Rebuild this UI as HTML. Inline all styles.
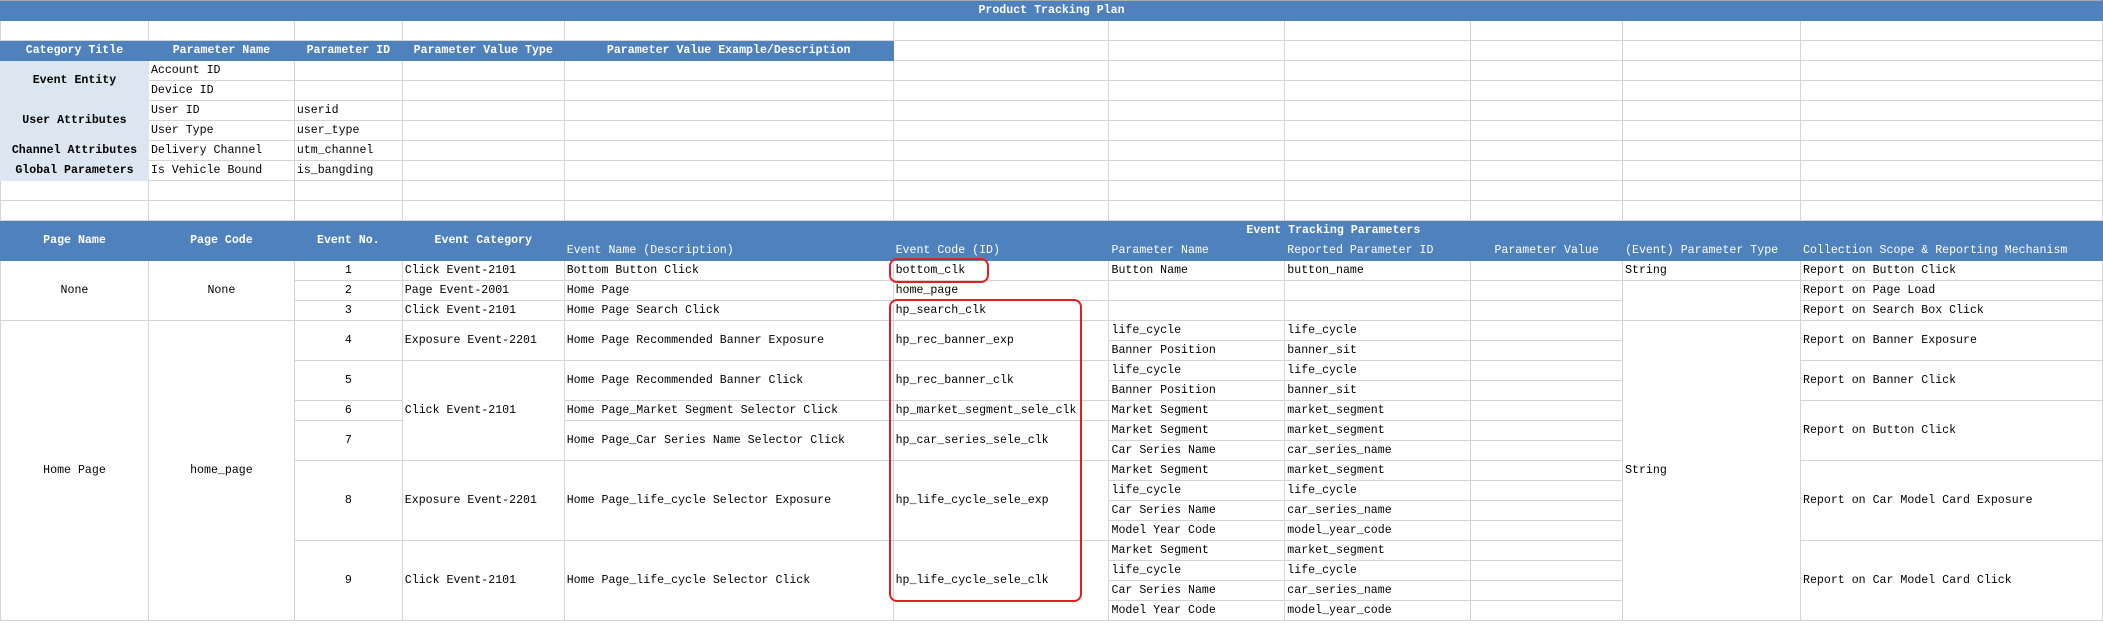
<!DOCTYPE html>
<html style="overflow:hidden;height:627px"><head><meta charset="utf-8"><style>
html,body{margin:0;width:2103px;height:627px;overflow:hidden;background:#fff}
body{position:relative}
table{border-collapse:collapse;table-layout:fixed;font-family:"Liberation Mono","Noto Sans CJK SC",monospace;font-size:11.6px;color:#000}
td{border:1px solid #d4d4d4;height:19px;padding:0 2px;white-space:nowrap;overflow:hidden;line-height:18px}
tr{height:20px}
.b{background:#4f81bd;color:#fff;border-color:#4f81bd;font-weight:bold;text-align:center}
.s{background:#4f81bd;color:#fff;border-color:#4f81bd;border-top:1px solid #9db5d8}
.lb{background:#dce6f1;border-color:#dce6f1;font-weight:bold;text-align:center}
.c{text-align:center}
.r{position:absolute;border:2px solid #e02020;border-radius:8px}
</style></head><body>
<table>
<colgroup><col style="width:148px"><col style="width:146px"><col style="width:108px"><col style="width:162px"><col style="width:329px"><col style="width:216px"><col style="width:176px"><col style="width:186px"><col style="width:152px"><col style="width:178px"><col style="width:302px"></colgroup>
<tr><td class="b" colspan="11" style="border-top:1px solid #aaa">Product Tracking Plan</td></tr>
<tr><td></td><td></td><td></td><td></td><td></td><td></td><td></td><td></td><td></td><td></td><td></td></tr>
<tr><td class="b">Category Title</td><td class="b">Parameter Name</td><td class="b">Parameter ID</td><td class="b">Parameter Value Type</td><td class="b">Parameter Value Example/Description</td><td></td><td></td><td></td><td></td><td></td><td></td></tr>
<tr><td class="lb" rowspan="2">Event Entity</td><td>Account ID</td><td></td><td></td><td></td><td></td><td></td><td></td><td></td><td></td><td></td></tr>
<tr><td>Device ID</td><td></td><td></td><td></td><td></td><td></td><td></td><td></td><td></td><td></td></tr>
<tr><td class="lb" rowspan="2">User Attributes</td><td>User ID</td><td>userid</td><td></td><td></td><td></td><td></td><td></td><td></td><td></td><td></td></tr>
<tr><td>User Type</td><td>user_type</td><td></td><td></td><td></td><td></td><td></td><td></td><td></td><td></td></tr>
<tr><td class="lb">Channel Attributes</td><td>Delivery Channel</td><td>utm_channel</td><td></td><td></td><td></td><td></td><td></td><td></td><td></td><td></td></tr>
<tr><td class="lb">Global Parameters</td><td>Is Vehicle Bound</td><td>is_bangding</td><td></td><td></td><td></td><td></td><td></td><td></td><td></td><td></td></tr>
<tr><td></td><td></td><td></td><td></td><td></td><td></td><td></td><td></td><td></td><td></td><td></td></tr>
<tr><td></td><td></td><td></td><td></td><td></td><td></td><td></td><td></td><td></td><td></td><td></td></tr>
<tr><td class="b" rowspan="2">Page Name</td><td class="b" rowspan="2">Page Code</td><td class="b" rowspan="2">Event No.</td><td class="b" rowspan="2">Event Category</td><td class="b" colspan="7">Event Tracking Parameters</td></tr>
<tr><td class="s">Event Name (Description)</td><td class="s">Event Code (ID)</td><td class="s">Parameter Name</td><td class="s">Reported Parameter ID</td><td class="s c">Parameter Value</td><td class="s">(Event) Parameter Type</td><td class="s">Collection Scope &amp; Reporting Mechanism</td></tr>
<tr><td class="c" rowspan="3">None</td><td class="c" rowspan="3">None</td><td class="c">1</td><td>Click Event-2101</td><td>Bottom Button Click</td><td>bottom_clk</td><td>Button Name</td><td>button_name</td><td></td><td>String</td><td>Report on Button Click</td></tr>
<tr><td class="c">2</td><td>Page Event-2001</td><td>Home Page</td><td>home_page</td><td></td><td></td><td></td><td rowspan="2"></td><td>Report on Page Load</td></tr>
<tr><td class="c">3</td><td>Click Event-2101</td><td>Home Page Search Click</td><td>hp_search_clk</td><td></td><td></td><td></td><td>Report on Search Box Click</td></tr>
<tr><td class="c" rowspan="15">Home Page</td><td class="c" rowspan="15">home_page</td><td class="c" rowspan="2">4</td><td rowspan="2">Exposure Event-2201</td><td rowspan="2">Home Page Recommended Banner Exposure</td><td rowspan="2">hp_rec_banner_exp</td><td>life_cycle</td><td>life_cycle</td><td></td><td rowspan="15">String</td><td rowspan="2">Report on Banner Exposure</td></tr>
<tr><td>Banner Position</td><td>banner_sit</td><td></td></tr>
<tr><td class="c" rowspan="2">5</td><td rowspan="5">Click Event-2101</td><td rowspan="2">Home Page Recommended Banner Click</td><td rowspan="2">hp_rec_banner_clk</td><td>life_cycle</td><td>life_cycle</td><td></td><td rowspan="2">Report on Banner Click</td></tr>
<tr><td>Banner Position</td><td>banner_sit</td><td></td></tr>
<tr><td class="c">6</td><td>Home Page_Market Segment Selector Click</td><td>hp_market_segment_sele_clk</td><td>Market Segment</td><td>market_segment</td><td></td><td rowspan="3">Report on Button Click</td></tr>
<tr><td class="c" rowspan="2">7</td><td rowspan="2">Home Page_Car Series Name Selector Click</td><td rowspan="2">hp_car_series_sele_clk</td><td>Market Segment</td><td>market_segment</td><td></td></tr>
<tr><td>Car Series Name</td><td>car_series_name</td><td></td></tr>
<tr><td class="c" rowspan="4">8</td><td rowspan="4">Exposure Event-2201</td><td rowspan="4">Home Page_life_cycle Selector Exposure</td><td rowspan="4">hp_life_cycle_sele_exp</td><td>Market Segment</td><td>market_segment</td><td></td><td rowspan="4">Report on Car Model Card Exposure</td></tr>
<tr><td>life_cycle</td><td>life_cycle</td><td></td></tr>
<tr><td>Car Series Name</td><td>car_series_name</td><td></td></tr>
<tr><td>Model Year Code</td><td>model_year_code</td><td></td></tr>
<tr><td class="c" rowspan="4">9</td><td rowspan="4">Click Event-2101</td><td rowspan="4">Home Page_life_cycle Selector Click</td><td rowspan="4">hp_life_cycle_sele_clk</td><td>Market Segment</td><td>market_segment</td><td></td><td rowspan="4">Report on Car Model Card Click</td></tr>
<tr><td>life_cycle</td><td>life_cycle</td><td></td></tr>
<tr><td>Car Series Name</td><td>car_series_name</td><td></td></tr>
<tr><td>Model Year Code</td><td>model_year_code</td><td></td></tr>
</table>
<div class="r" style="left:889px;top:258px;width:96px;height:21px"></div>
<div class="r" style="left:889px;top:299px;width:189px;height:299px"></div>
</body></html>
